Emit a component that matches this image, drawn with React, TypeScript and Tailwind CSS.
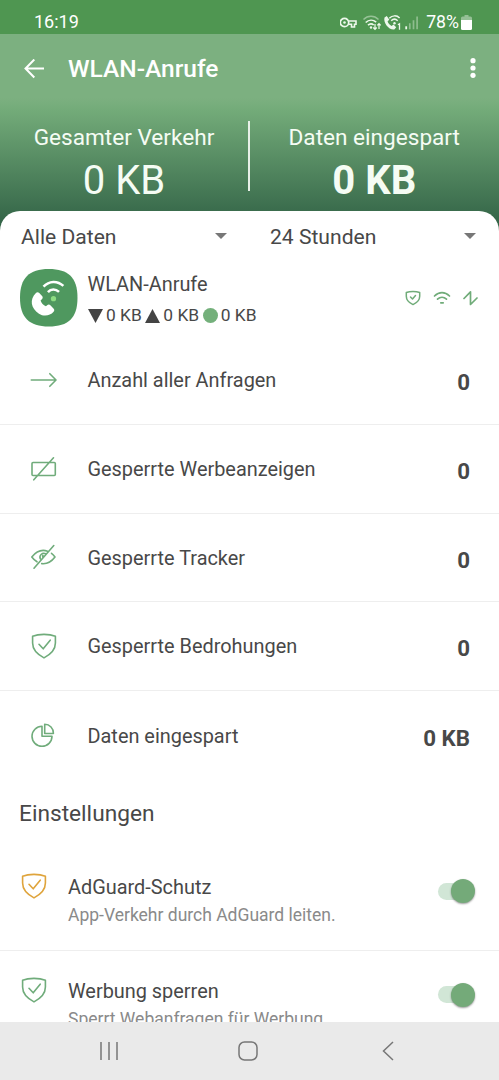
import React from "react";

type IconProps = { className?: string };

const ShieldIcon = ({ className = "" }: IconProps) => (
  <svg viewBox="0 0 26 26" className={className} fill="none" stroke="currentColor" strokeWidth="1.6" strokeLinecap="round" strokeLinejoin="round">
    <path d="M13 1.4c4 0 8 .5 11.4 1.900v6.800c0 6.300-4.600 11.300-11.400 14.800C6.200 21.400 1.600 16.400 1.600 10.100V3.300C5 1.900 9 1.400 13 1.400Z" />
    <path d="m8 11.300 4.200 4.500L19.200 7.200" />
  </svg>
);

const SmallShieldIcon = ({ className = "" }: IconProps) => (
  <svg viewBox="0 0 16 16" className={className} fill="none" stroke="currentColor" strokeWidth="1.500" strokeLinecap="round" strokeLinejoin="round">
    <path d="M8 1.500c2.500 0 4.700.3 6.700 1v3.800c0 3.700-2.700 6.500-6.700 8.300-4-1.800-6.700-4.600-6.700-8.300V2.500c2-.7 4.200-1 6.700-1Z" />
    <path d="m5.500 7 2 2 3-3.500" />
  </svg>
);

const ArrowIcon = () => (
  <svg viewBox="0 0 28 28" className="size-7" fill="none" stroke="currentColor" strokeWidth="1.600" strokeLinecap="round" strokeLinejoin="round">
    <path d="M2.300 14h24.500M20.800 7.700l6.200 6.300-6.200 6.300" />
  </svg>
);

const AdsIcon = () => (
  <svg viewBox="0 0 28 28" className="size-7" fill="none" stroke="currentColor" strokeWidth="1.600" strokeLinecap="round" strokeLinejoin="round">
    <path d="M20.500 7.500H4a1 1 0 0 0-1 1v11a1 1 0 0 0 1 1h4.500M8.500 20.500h16.800a1 1 0 0 0 1-1v-11a1 1 0 0 0-1-1H20.500M4.800 24.800 24.500 2.800" />
  </svg>
);

const TrackerIcon = () => (
  <svg viewBox="0 0 28 28" className="size-7" fill="none" stroke="currentColor" strokeWidth="1.600" strokeLinecap="round" strokeLinejoin="round">
    <path d="M18.500 8.200C12.300 6 6.800 9 2.800 14c1.500 2 3.200 3.600 5.200 4.800M22.500 10.300c1.300 1 2.500 2.300 3.500 3.700-3.800 5-8.500 7.200-13.300 6.600M16.700 10.700c-3.500-1.500-7 1.800-5.300 5.200M14 12.300a2 2 0 0 0-.3 1.500M5 25.200 24.800 2.500" />
  </svg>
);

const PieIcon = () => (
  <svg viewBox="0 0 28 28" className="size-7" fill="none" stroke="currentColor" strokeWidth="1.600" strokeLinejoin="round">
    <path d="M13 5.300A10 10 0 1 0 23 15.300H13Z" />
    <path d="M15.700 3.300v9.200h8.700a8.700 8.700 0 0 0-8.700-9.200Z" />
  </svg>
);

const Handset = ({ className = "" }: IconProps) => (
  <svg viewBox="0 0 57 57" className={className}>
    <path d="M28.500 0C48 0 57 8.500 57 28.500S48 57 28.500 57 0 48 0 28.500 9 0 28.500 0Z" fill="#4f985f" />
    <path d="M16.300 23.700c1-.9 2.300-.9 3.300.1l2.800 3c.9 1 .8 2.300-.2 3.200l-1.300 1.300c.7 2.400 2.700 4.700 5.300 5.700l1.200-1.100c1-.9 2.300-1 3.200 0l3.300 3.500c.8.900.8 2.100-.1 3-3.500 4.100-9.700 5.100-14.500 1.900-8.100-5.500-9.600-14.200-3-20.600Z" fill="#fff" transform="translate(-.5 0)" />
    <path d="M23.300 17.500c5.500-6 13.700-6.300 19.700-.7" fill="none" stroke="#fff" strokeWidth="2.500" />
    <path d="M27.700 22.900c3-3.500 7.500-3.500 11-.2" fill="none" stroke="#fff" strokeWidth="2.500" />
    <circle cx="33.200" cy="29.400" r="2.600" fill="#8ddc83" />
  </svg>
);

const StatusIcons = () => (
  <svg viewBox="0 0 84 20" className="h-5 w-21 shrink-0" fill="none" stroke="#eef8ec">
    <circle cx="4.500" cy="10.500" r="4.200" strokeWidth="1.700" />
    <circle cx="4.500" cy="10.500" r="1.300" fill="#eef8ec" stroke="none" />
    <path d="M8.500 9H16v3.200h-1.500V15h-3v-2.800h-3" strokeWidth="1.600" />
    <path d="M23.500 7.500c4.300-4.300 10.700-4.300 15 0" strokeWidth="1.500" opacity=".45" />
    <path d="M25.700 10.500c3.200-3 7.400-3 10.500-.4M28 13.200c1.800-1.700 4-1.700 5.700-.2" strokeWidth="1.600" />
    <circle cx="31" cy="15.500" r="1.200" fill="#eef8ec" stroke="none" />
    <path d="M35 12v5.200m-1.800-1.700 1.800 1.800 1.700-1.800M39 17v-5.300m-1.700 1.700 1.700-1.800 1.700 1.800" strokeWidth="1.200" />
    <path d="M44.500 5.500 46.800 4l2.500 3.700-1.700 1.600c.5 2.200 2 3.700 4 4.600l1.900-1.300 2.700 2.700-1.900 2.200C49 18.300 43 11 44.500 5.500Z" fill="#eef8ec" stroke="none" />
    <path d="M49.300 6.300c3-3.200 7.500-3.200 10.300-.2M51.200 8.800c2-2 4.500-2 6.500-.1" strokeWidth="1.500" />
    <circle cx="54.500" cy="11.300" r="1.200" fill="#eef8ec" stroke="none" />
    <path d="m57.900 12.800 1.600-1v6" strokeWidth="1.300" />
    <path d="M66.200 17.300v-3" strokeWidth="1.800" />
    <path d="M69.800 17.300v-6M73.500 17.300V8.200M77.100 17.300V4.600" strokeWidth="1.700" opacity=".4" />
  </svg>
);

const stats = [
  { label: "Anzahl aller Anfragen", value: "0", icon: <ArrowIcon /> },
  { label: "Gesperrte Werbeanzeigen", value: "0", icon: <AdsIcon /> },
  { label: "Gesperrte Tracker", value: "0", icon: <TrackerIcon /> },
  { label: "Gesperrte Bedrohungen", value: "0", icon: <ShieldIcon className="ml-px size-[26px]" /> },
  { label: "Daten eingespart", value: "0 KB", icon: <PieIcon /> },
];

const settings = [
  { title: "AdGuard-Schutz", text: "App-Verkehr durch AdGuard leiten.", tint: "text-[#dfa43c]" },
  { title: "Werbung sperren", text: "Sperrt Webanfragen für Werbung", tint: "text-[#70ac7b]" },
];

const Caret = () => (
  <svg viewBox="0 0 12 6" className="h-1.5 w-3" fill="#777">
    <path d="M0 0h12L6 6Z" />
  </svg>
);

const Toggle = () => (
  <div className="flex h-6 w-[38px] shrink-0 items-center justify-end rounded-full">
    <div className="-mr-5 h-[17px] w-[33px] rounded-full bg-[#d1e6d6]" />
    <div className="relative size-6 shrink-0 rounded-full bg-[#74aa79] shadow-[0_1px_2px_rgba(0,0,0,0.4)]" />
  </div>
);

export default function App() {
  return (
    <div className="flex h-[1080px] w-[499px] flex-col overflow-hidden bg-white font-['Roboto',sans-serif] text-[#484848]">
      <div className="flex h-[34px] shrink-0 items-center bg-[#4f9651] pt-2.5 pr-[27px] pl-[34px] text-white">
        <span className="flex-1 text-[18px] leading-6">16:19</span>
        <StatusIcons />
        <span className="ml-0.5 text-[17.700px] leading-6">78%</span>
        <svg viewBox="0 0 11 15" className="ml-[2px] h-[15px] w-[11px]">
          <path d="M3.500 0h4v1.500h2a1.500 1.500 0 0 1 1.500 1.500v2.500H0V3a1.500 1.500 0 0 1 1.500-1.500h2Z" fill="#fff" opacity=".4" />
          <path d="M0 5h11v8.500a1.500 1.500 0 0 1-1.500 1.500h-8A1.500 1.500 0 0 1 0 13.500Z" fill="#fff" />
        </svg>
      </div>

      <div className="flex min-h-0 flex-1 flex-col bg-[linear-gradient(#7cb080_0,#7cb080_64px,#73ab79_76px,#336447_190px)]">
        <header className="flex h-[69px] shrink-0 items-center pr-[23px] pl-6 text-white">
          <svg viewBox="0 0 20 20" className="size-5" fill="none" stroke="currentColor" strokeWidth="2">
            <path d="M20 9.500H2M10.300.5 1.500 9.500l8.800 9" />
          </svg>
          <h1 className="ml-6 flex-1 pt-0.5 text-[24.500px] font-medium">WLAN-Anrufe</h1>
          <svg viewBox="0 0 6 20" className="mb-0.5 h-5 w-1.5" fill="currentColor">
            <circle cx="3" cy="2.700" r="2.600" />
            <circle cx="3" cy="10" r="2.600" />
            <circle cx="3" cy="17.300" r="2.600" />
          </svg>
        </header>

        <section className="flex h-[108px] shrink-0 text-center text-[#f5fcf4]">
          <div className="w-[248px] pt-[19px]">
            <div className="text-[22.600px] leading-[31px]">Gesamter Verkehr</div>
            <div className="text-[40px] leading-[55px]">0 KB</div>
          </div>
          <div className="mt-[18px] h-[70px] w-[1.500px] bg-[#e8f0e8]" />
          <div className="flex-1 pt-[19px]">
            <div className="text-[22.600px] leading-[31px]">Daten eingespart</div>
            <div className="text-[40px] leading-[55px] font-bold">0 KB</div>
          </div>
        </section>

        <main className="min-h-0 flex-1 overflow-hidden rounded-t-[20px] bg-white">
          <div className="flex h-[51px] items-center text-[21.100px]">
            <div className="flex w-[249px] items-center justify-between pr-[22px] pl-[21px]">Alle Daten<Caret /></div>
            <div className="flex flex-1 items-center justify-between pr-[23px] pl-[21px]">24 Stunden<Caret /></div>
          </div>

          <div className="flex h-[74.200px] pt-[7px] pr-[21px] pl-5">
            <Handset className="size-[57.500px] shrink-0" />
            <div className="ml-[10px] flex-1">
              <div className="text-[19.900px] leading-[32px]">WLAN-Anrufe</div>
              <div className="flex h-[29px] items-center text-[17.400px]">
                <svg viewBox="0 0 15 14" className="h-3.5 w-[15px]" fill="#444"><path d="M0 0h15L7.500 14Z" /></svg>
                <span className="ml-[3.500px]">0 KB</span>
                <svg viewBox="0 0 15 14" className="ml-[3px] h-3.5 w-[15px]" fill="#444"><path d="M7.500 0 15 14H0Z" /></svg>
                <span className="ml-[3.500px]">0 KB</span>
                <span className="ml-[3.500px] size-[15px] rounded-full bg-[#74b07b]" />
                <span className="ml-[3px]">0 KB</span>
              </div>
            </div>
            <div className="flex h-[58px] items-center gap-3 text-[#70ac79]">
              <SmallShieldIcon className="size-4" />
              <svg viewBox="0 0 18 16" className="h-4 w-[18px]" fill="none" stroke="currentColor" strokeWidth="1.700" strokeLinecap="round">
                <path d="M1.500 6C6 1.500 12 1.500 16.500 6M4.500 9.200c2.700-2.600 6.300-2.600 9 0M7.800 12.800h2.400" />
              </svg>
              <svg viewBox="0 0 15 16" className="h-4 w-[15px]" fill="none" stroke="currentColor" strokeWidth="1.700" strokeLinecap="round" strokeLinejoin="round">
                <path d="m1 8.500 6.500-6.700v12.700L14 8" />
              </svg>
            </div>
          </div>

          {stats.map((row, i) => (
            <div
              key={row.label}
              className={`flex h-[88.700px] items-center pr-[29px] pl-[29px] ${i < stats.length - 1 ? "border-b border-[#eee]" : ""}`}
            >
              <div className="flex w-7 justify-center text-[#70ac7b]">{row.icon}</div>
              <div className="ml-[30.500px] flex-1 pt-[2.500px] text-[19.900px]">{row.label}</div>
              <div className="pt-[6px] text-[22.300px] font-bold">{row.value}</div>
            </div>
          ))}

          <h2 className="flex h-[67.500px] items-center pt-0.5 pl-[19px] text-[22.700px]">Einstellungen</h2>

          {settings.map((row) => (
            <div key={row.title} className="flex h-[103.500px] border-b border-[#eee] pr-6 pl-[21px]">
              <ShieldIcon className={`mt-[26px] size-[26px] shrink-0 ${row.tint}`} />
              <div className="ml-[21px] flex-1 pt-[26px]">
                <div className="text-[19.900px] leading-[29px]">{row.title}</div>
                <div className="text-[17.500px] leading-[26px] text-[#8a8a8a]">{row.text}</div>
              </div>
              <div className="pt-8"><Toggle /></div>
            </div>
          ))}
        </main>
      </div>

      <nav className="flex h-[58px] shrink-0 items-center bg-[#eaeaea] pl-[99px] text-[#777]">
        <svg viewBox="0 0 20 20" className="size-5" fill="none" stroke="currentColor" strokeWidth="1.500">
          <path d="M2 1v18M10 1v18M18 1v18" />
        </svg>
        <svg viewBox="0 0 20 20" className="ml-[119px] size-5" fill="none" stroke="currentColor" strokeWidth="1.500">
          <rect x="1" y="1" width="18" height="18" rx="5.500" />
        </svg>
        <svg viewBox="0 0 12 20" className="ml-[124px] h-5 w-3" fill="none" stroke="currentColor" strokeWidth="1.500">
          <path d="m11 1-9.500 9 9.500 9" />
        </svg>
      </nav>
    </div>
  );
}
